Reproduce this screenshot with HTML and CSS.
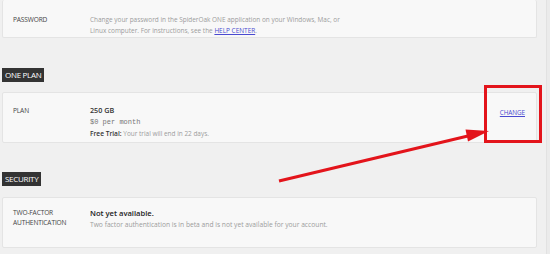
FILE: index.html
```html
<!DOCTYPE html>
<html>
<head>
<meta charset="utf-8">
<link rel="stylesheet" href="styles.css">
</head>
<body>
<div class="panel">
<div class="page">
  <div class="card card-pw">
    <div class="label">PASSWORD</div>
    <div class="value desc">Change your password in the SpiderOak ONE application on your Windows, Mac, or<br>Linux computer. For instructions, see the <a href="#" class="link">HELP CENTER</a>.</div>
  </div>

  <div class="section-head head-plan"><span>ONE PLAN</span></div>
  <div class="card card-plan">
    <div class="label">PLAN</div>
    <div class="value">
      <div class="size">250 GB</div>
      <div class="mono">$0 per month</div>
      <div class="trial"><b>Free Trial:</b> <span class="desc">Your trial will end in 22 days.</span></div>
    </div>
    <a href="#" class="link change">CHANGE</a>
  </div>

  <div class="section-head head-sec"><span>SECURITY</span></div>
  <div class="card card-sec">
    <div class="label">TWO-FACTOR<br>AUTHENTICATION</div>
    <div class="value">
      <div class="strong">Not yet available.</div>
      <div class="desc">Two factor authentication is in beta and is not yet available for your account.</div>
    </div>
  </div>
</div>
</div>

<svg class="annot" width="550" height="254" viewBox="0 0 550 254">
  <rect x="485.5" y="86.5" width="55" height="55" fill="none" stroke="#e3141b" stroke-width="3"/>
  <line x1="279" y1="181" x2="470" y2="135.5" stroke="#e3141b" stroke-width="3"/>
  <polygon points="489,131 468,141.5 465.5,129.5" fill="#e3141b"/>
</svg>
</body>
</html>
```
FILE: styles.css
```css
html, body {
  margin: 0;
  padding: 0;
}
body {
  background: #ebebeb;
  font-family: "Open Sans", "Noto Sans", sans-serif;
  width: 550px;
  height: 254px;
  overflow: hidden;
  position: relative;
}
.panel {
  width: 547px;
  height: 254px;
  background: #f0f0f0;
  border-right: 1px solid #e2e2e2;
  box-sizing: border-box;
}
.page {
  width: 535px;
  margin-left: 2px;
  display: flex;
  flex-direction: column;
}
.card {
  background: #f8f8f8;
  border: 1px solid #e4e4e4;
  border-radius: 2px;
  display: flex;
  align-items: flex-start;
  padding-left: 10px;
  box-sizing: border-box;
  width: 100%;
}
.card-pw {
  height: 38px;
  border-top: none;
  padding-top: 14px;
}
.card-plan {
  height: 51px;
  padding-top: 12px;
}
.card-sec {
  height: 51px;
  padding-top: 9px;
}
.label {
  width: 77px;
  flex: none;
  font-size: 6.6px;
  line-height: 10px;
  color: #444;
  letter-spacing: -0.15px;
  padding-top: 1px;
}
.value {
  flex: 1;
  font-size: 6.6px;
  line-height: 11.5px;
  color: #333;
}
.desc {
  color: #9c9c9c;
  font-weight: 400;
  font-size: 6.45px;
}
.card-pw .desc { line-height: 11px; }
.card-sec .desc { font-size: 6.7px; }
.link {
  color: #4a4ad0;
  text-decoration: underline;
}
.size {
  font-weight: 600;
  font-size: 7.2px;
  color: #333;
}
.mono {
  font-family: "Liberation Mono", "DejaVu Sans Mono", monospace;
  font-size: 7px;
  color: #777;
}
.trial b {
  font-weight: 600;
  color: #333;
}
.strong {
  font-weight: 600;
  font-size: 7.6px;
  color: #222;
  line-height: 12px;
}
.change {
  font-size: 6.4px;
  margin: 3px 11px 0 0;
  letter-spacing: -0.1px;
}
.section-head {
  display: flex;
}
.head-plan { margin: 30px 0 10px; }
.head-sec { margin: 29px 0 11px; }
.section-head span {
  background: #333;
  color: #fff;
  font-size: 8px;
  line-height: 14px;
  padding: 0 3px;
  letter-spacing: -0.3px;
}
.annot {
  position: absolute;
  left: 0;
  top: 0;
  pointer-events: none;
}
```
